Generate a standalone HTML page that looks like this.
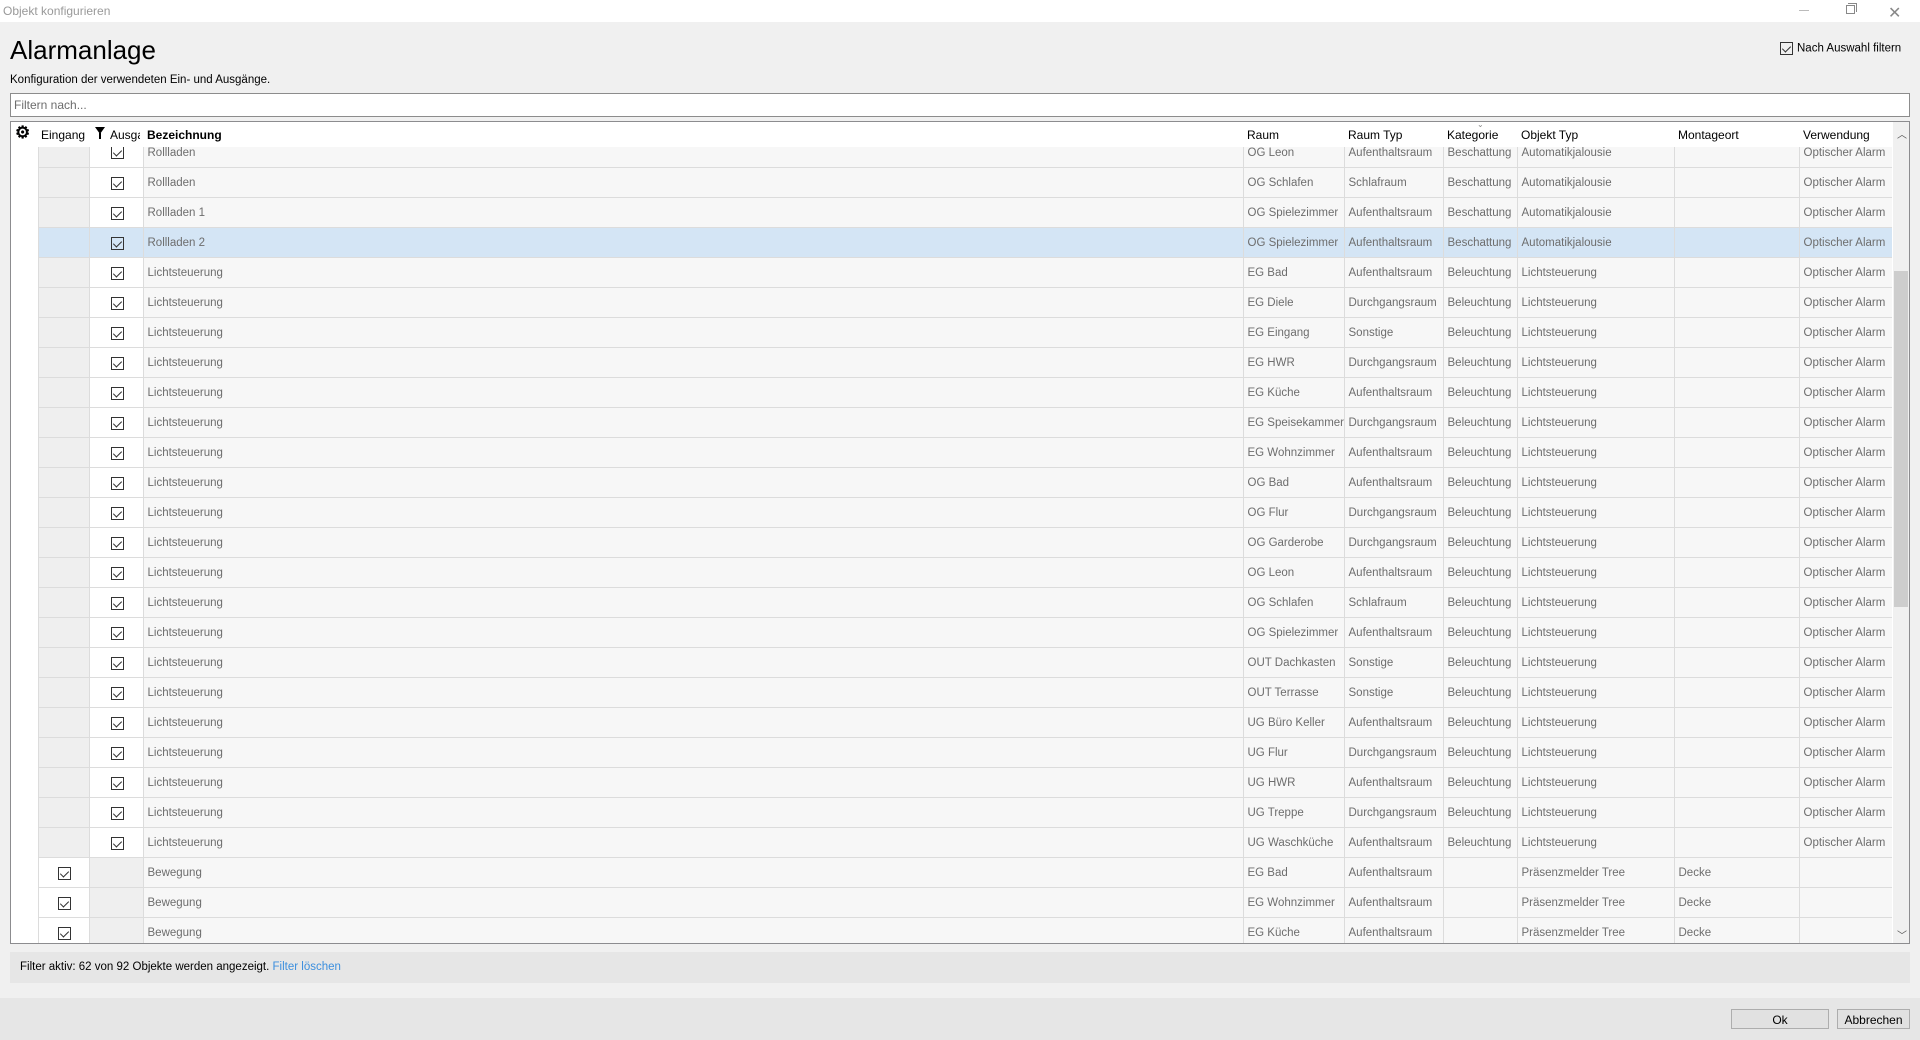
<!DOCTYPE html>
<html><head><meta charset="utf-8">
<style>
*{box-sizing:border-box;margin:0;padding:0}
body{width:1920px;height:1040px;background:#f0f0f0;font-family:"Liberation Sans",sans-serif;position:relative;overflow:hidden;color:#000}
.abs{position:absolute}
.titlebar{left:0;top:0;width:1920px;height:22px;background:#fff}
.titlebar .t{left:3px;top:4px;font-size:12px;color:#999}
h1{position:absolute;left:10px;top:35px;font-size:26px;font-weight:normal}
.sub{left:10px;top:74px;font-size:11.5px}
.filter{left:10px;top:93px;width:1900px;height:24px;background:#fff;border:1px solid #8c8c8c;font-size:12px;color:#6d6d6d;padding:4px 3px}
.grid{left:10px;top:121px;width:1900px;height:823px;border:1px solid #8c8c8f;background:#fff;overflow:hidden}
.head{left:0;top:0;width:1881px;height:25px;background:#fff;z-index:2;font-size:12px}
.head div{position:absolute;top:6px}
.body{left:0;top:15px;width:1881px;height:807px;overflow:hidden}
table{border-collapse:collapse;table-layout:fixed;width:1881px}
td{height:30px;border:1px solid #dcdcdc;border-top:none;background:#f7f7f7;font-size:11.5px;color:#6d6d6d;padding:2px 0 0 4px;white-space:nowrap;overflow:hidden}
td.g{background:#fff;border:none;border-right:1px solid #dcdcdc}
td.w{background:#fff}
td.d{background:#efefef}
tr.sel td:not(.g){background:#d4e5f5}
.cb{display:inline-block;width:13px;height:13px;border:1px solid #333;position:relative;vertical-align:middle;margin-left:17px}
.cb:after{content:"";position:absolute;left:3px;top:1px;width:4px;height:7px;border:solid #333;border-width:0 1px 1px 0;transform:rotate(45deg)}
.sb{left:1882px;top:0;width:17px;height:821px;background:#f0f0f0;z-index:3}
.thumb{left:1883px;top:149px;width:14px;height:336px;background:#cdcdcd;z-index:4}
.foot{left:10px;top:952px;width:1900px;height:31px;background:#e6e6e6;font-size:11.5px;padding:9px 10px}
.bottom{left:0;top:998px;width:1920px;height:42px;background:#e6e6e6}
.btn{top:1009px;height:20px;border:1px solid #adadad;background:#e1e1e1;font-size:12px;text-align:center;padding-top:3px}
</style></head><body>
<div class="abs titlebar"><div class="abs t">Objekt konfigurieren</div>
<div class="abs" style="left:1799px;top:10px;width:10px;height:1px;background:#bbb"></div>
<div class="abs" style="left:1846px;top:5px;width:9px;height:9px;border:1px solid #888"></div>
<div class="abs" style="left:1848px;top:3px;width:9px;height:9px;border-top:1px solid #888;border-right:1px solid #888"></div>
<div class="abs" style="left:1888px;top:3px;font-size:16px;color:#888">✕</div>
</div>
<h1>Alarmanlage</h1>
<div class="abs sub">Konfiguration der verwendeten Ein- und Ausgänge.</div>
<div class="abs" style="left:1780px;top:42px;font-size:11.5px"><span class="cb" style="margin:0 4px 0 0;width:13px;height:13px"></span>Nach Auswahl filtern</div>
<div class="abs filter">Filtern nach...</div>
<div class="abs grid">
 <div class="abs head">
  <div style="left:4px;top:1px;font-size:17px;font-weight:bold">⚙</div>
  <div style="left:30px">Eingang</div>
  <div style="left:84px;top:5px;width:0;height:0;border-left:5px solid transparent;border-right:5px solid transparent;border-top:7px solid #000"></div>
  <div style="top:11px;width:2px;height:6px;background:#000;left:88px"></div>
  <div style="left:99px;width:30px;overflow:hidden">Ausgang</div>
  <div style="left:136px;font-weight:bold">Bezeichnung</div>
  <div style="left:1236px">Raum</div>
  <div style="left:1337px">Raum Typ</div>
  <div style="left:1436px">Kategorie</div>
  <div style="left:1466px;top:-2px;font-size:8px;color:#888">⌄</div>
  <div style="left:1510px">Objekt Typ</div>
  <div style="left:1667px">Montageort</div>
  <div style="left:1792px">Verwendung</div>
 </div>
 <div class="abs sb"><div class="abs" style="left:4px;top:4px;font-size:10px;color:#555">︿</div><div class="abs" style="left:4px;top:805px;font-size:10px;color:#555">﹀</div></div>
 <div class="abs thumb"></div>
 <div class="abs body"><table style="margin-top:0">
 <colgroup><col style="width:27px"><col style="width:51px"><col style="width:54px"><col style="width:1100px"><col style="width:101px"><col style="width:99px"><col style="width:74px"><col style="width:157px"><col style="width:125px"><col style="width:93px"></colgroup>
 <tr><td class="g"></td><td class="d"></td><td class="w"><span class="cb"></span></td><td>Rollladen</td><td>OG Leon</td><td>Aufenthaltsraum</td><td>Beschattung</td><td>Automatikjalousie</td><td></td><td>Optischer Alarm</td></tr>
 <tr><td class="g"></td><td class="d"></td><td class="w"><span class="cb"></span></td><td>Rollladen</td><td>OG Schlafen</td><td>Schlafraum</td><td>Beschattung</td><td>Automatikjalousie</td><td></td><td>Optischer Alarm</td></tr>
 <tr><td class="g"></td><td class="d"></td><td class="w"><span class="cb"></span></td><td>Rollladen 1</td><td>OG Spielezimmer</td><td>Aufenthaltsraum</td><td>Beschattung</td><td>Automatikjalousie</td><td></td><td>Optischer Alarm</td></tr>
 <tr class="sel"><td class="g"></td><td class="d"></td><td class="w"><span class="cb"></span></td><td>Rollladen 2</td><td>OG Spielezimmer</td><td>Aufenthaltsraum</td><td>Beschattung</td><td>Automatikjalousie</td><td></td><td>Optischer Alarm</td></tr>
 <tr><td class="g"></td><td class="d"></td><td class="w"><span class="cb"></span></td><td>Lichtsteuerung</td><td>EG Bad</td><td>Aufenthaltsraum</td><td>Beleuchtung</td><td>Lichtsteuerung</td><td></td><td>Optischer Alarm</td></tr>
 <tr><td class="g"></td><td class="d"></td><td class="w"><span class="cb"></span></td><td>Lichtsteuerung</td><td>EG Diele</td><td>Durchgangsraum</td><td>Beleuchtung</td><td>Lichtsteuerung</td><td></td><td>Optischer Alarm</td></tr>
 <tr><td class="g"></td><td class="d"></td><td class="w"><span class="cb"></span></td><td>Lichtsteuerung</td><td>EG Eingang</td><td>Sonstige</td><td>Beleuchtung</td><td>Lichtsteuerung</td><td></td><td>Optischer Alarm</td></tr>
 <tr><td class="g"></td><td class="d"></td><td class="w"><span class="cb"></span></td><td>Lichtsteuerung</td><td>EG HWR</td><td>Durchgangsraum</td><td>Beleuchtung</td><td>Lichtsteuerung</td><td></td><td>Optischer Alarm</td></tr>
 <tr><td class="g"></td><td class="d"></td><td class="w"><span class="cb"></span></td><td>Lichtsteuerung</td><td>EG Küche</td><td>Aufenthaltsraum</td><td>Beleuchtung</td><td>Lichtsteuerung</td><td></td><td>Optischer Alarm</td></tr>
 <tr><td class="g"></td><td class="d"></td><td class="w"><span class="cb"></span></td><td>Lichtsteuerung</td><td>EG Speisekammer</td><td>Durchgangsraum</td><td>Beleuchtung</td><td>Lichtsteuerung</td><td></td><td>Optischer Alarm</td></tr>
 <tr><td class="g"></td><td class="d"></td><td class="w"><span class="cb"></span></td><td>Lichtsteuerung</td><td>EG Wohnzimmer</td><td>Aufenthaltsraum</td><td>Beleuchtung</td><td>Lichtsteuerung</td><td></td><td>Optischer Alarm</td></tr>
 <tr><td class="g"></td><td class="d"></td><td class="w"><span class="cb"></span></td><td>Lichtsteuerung</td><td>OG Bad</td><td>Aufenthaltsraum</td><td>Beleuchtung</td><td>Lichtsteuerung</td><td></td><td>Optischer Alarm</td></tr>
 <tr><td class="g"></td><td class="d"></td><td class="w"><span class="cb"></span></td><td>Lichtsteuerung</td><td>OG Flur</td><td>Durchgangsraum</td><td>Beleuchtung</td><td>Lichtsteuerung</td><td></td><td>Optischer Alarm</td></tr>
 <tr><td class="g"></td><td class="d"></td><td class="w"><span class="cb"></span></td><td>Lichtsteuerung</td><td>OG Garderobe</td><td>Durchgangsraum</td><td>Beleuchtung</td><td>Lichtsteuerung</td><td></td><td>Optischer Alarm</td></tr>
 <tr><td class="g"></td><td class="d"></td><td class="w"><span class="cb"></span></td><td>Lichtsteuerung</td><td>OG Leon</td><td>Aufenthaltsraum</td><td>Beleuchtung</td><td>Lichtsteuerung</td><td></td><td>Optischer Alarm</td></tr>
 <tr><td class="g"></td><td class="d"></td><td class="w"><span class="cb"></span></td><td>Lichtsteuerung</td><td>OG Schlafen</td><td>Schlafraum</td><td>Beleuchtung</td><td>Lichtsteuerung</td><td></td><td>Optischer Alarm</td></tr>
 <tr><td class="g"></td><td class="d"></td><td class="w"><span class="cb"></span></td><td>Lichtsteuerung</td><td>OG Spielezimmer</td><td>Aufenthaltsraum</td><td>Beleuchtung</td><td>Lichtsteuerung</td><td></td><td>Optischer Alarm</td></tr>
 <tr><td class="g"></td><td class="d"></td><td class="w"><span class="cb"></span></td><td>Lichtsteuerung</td><td>OUT Dachkasten</td><td>Sonstige</td><td>Beleuchtung</td><td>Lichtsteuerung</td><td></td><td>Optischer Alarm</td></tr>
 <tr><td class="g"></td><td class="d"></td><td class="w"><span class="cb"></span></td><td>Lichtsteuerung</td><td>OUT Terrasse</td><td>Sonstige</td><td>Beleuchtung</td><td>Lichtsteuerung</td><td></td><td>Optischer Alarm</td></tr>
 <tr><td class="g"></td><td class="d"></td><td class="w"><span class="cb"></span></td><td>Lichtsteuerung</td><td>UG Büro Keller</td><td>Aufenthaltsraum</td><td>Beleuchtung</td><td>Lichtsteuerung</td><td></td><td>Optischer Alarm</td></tr>
 <tr><td class="g"></td><td class="d"></td><td class="w"><span class="cb"></span></td><td>Lichtsteuerung</td><td>UG Flur</td><td>Durchgangsraum</td><td>Beleuchtung</td><td>Lichtsteuerung</td><td></td><td>Optischer Alarm</td></tr>
 <tr><td class="g"></td><td class="d"></td><td class="w"><span class="cb"></span></td><td>Lichtsteuerung</td><td>UG HWR</td><td>Aufenthaltsraum</td><td>Beleuchtung</td><td>Lichtsteuerung</td><td></td><td>Optischer Alarm</td></tr>
 <tr><td class="g"></td><td class="d"></td><td class="w"><span class="cb"></span></td><td>Lichtsteuerung</td><td>UG Treppe</td><td>Durchgangsraum</td><td>Beleuchtung</td><td>Lichtsteuerung</td><td></td><td>Optischer Alarm</td></tr>
 <tr><td class="g"></td><td class="d"></td><td class="w"><span class="cb"></span></td><td>Lichtsteuerung</td><td>UG Waschküche</td><td>Aufenthaltsraum</td><td>Beleuchtung</td><td>Lichtsteuerung</td><td></td><td>Optischer Alarm</td></tr>
 <tr><td class="g"></td><td class="w"><span class="cb" style="margin-left:15px"></span></td><td class="d"></td><td>Bewegung</td><td>EG Bad</td><td>Aufenthaltsraum</td><td></td><td>Präsenzmelder Tree</td><td>Decke</td><td></td></tr>
 <tr><td class="g"></td><td class="w"><span class="cb" style="margin-left:15px"></span></td><td class="d"></td><td>Bewegung</td><td>EG Wohnzimmer</td><td>Aufenthaltsraum</td><td></td><td>Präsenzmelder Tree</td><td>Decke</td><td></td></tr>
 <tr><td class="g"></td><td class="w"><span class="cb" style="margin-left:15px"></span></td><td class="d"></td><td>Bewegung</td><td>EG Küche</td><td>Aufenthaltsraum</td><td></td><td>Präsenzmelder Tree</td><td>Decke</td><td></td></tr>
 </table></div>
</div>
<div class="abs foot">Filter aktiv: 62 von 92 Objekte werden angezeigt. <span style="color:#3c8fde">Filter löschen</span></div>
<div class="abs bottom"></div>
<div class="abs btn" style="left:1731px;width:98px">Ok</div>
<div class="abs btn" style="left:1837px;width:73px">Abbrechen</div>
</body></html>
